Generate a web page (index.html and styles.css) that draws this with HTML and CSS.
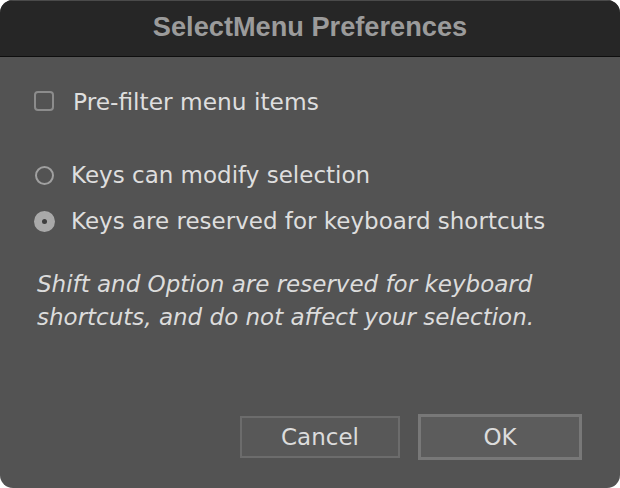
FILE: index.html
```html
<!DOCTYPE html>
<html>
<head>
<meta charset="utf-8">
<link rel="stylesheet" href="styles.css">
</head>
<body>
<div class="window">
  <div class="titlebar">SelectMenu Preferences</div>
  <div class="content">
    <label class="row check-row">
      <span class="checkbox"></span>
      <span class="label">Pre-filter menu items</span>
    </label>
    <div class="radios">
      <label class="row radio-row">
        <span class="radio"></span>
        <span class="label">Keys can modify selection</span>
      </label>
      <label class="row radio-row">
        <span class="radio checked"></span>
        <span class="label">Keys are reserved for keyboard shortcuts</span>
      </label>
    </div>
    <p class="note">Shift and Option are reserved for keyboard shortcuts, and do not affect your selection.</p>
    <div class="buttons">
      <button class="btn cancel">Cancel</button>
      <button class="btn ok">OK</button>
    </div>
  </div>
</div>
</body>
</html>
```
FILE: styles.css
```css
html, body {
  margin: 0;
  padding: 0;
  background: #ffffff;
}
.window {
  width: 620px;
  height: 488px;
  border-radius: 13px;
  overflow: hidden;
  background: #535353;
  display: flex;
  flex-direction: column;
  font-family: "DejaVu Sans", sans-serif;
}
.titlebar {
  background: #262626;
  border-top: 1px solid #4a4a4a;
  border-bottom: 1px solid #0e0e0e;
  box-sizing: border-box;
  height: 57px;
  flex: none;
  display: flex;
  align-items: center;
  justify-content: center;
  color: #9b9b9b;
  font-family: "Liberation Sans", Arial, sans-serif;
  font-weight: bold;
  font-size: 27.2px;
  padding-bottom: 3px;
}
.content {
  flex: 1;
  display: flex;
  flex-direction: column;
  padding: 0 38px 28px 34px;
  color: #dedede;
}
.row {
  display: flex;
  align-items: center;
  font-size: 23px;
  height: 24px;
}
.check-row {
  margin-top: 32px;
  font-size: 23.3px;
}
.checkbox {
  width: 16px;
  height: 16px;
  border: 2px solid #8c8c8c;
  border-radius: 4px;
  margin-right: 19px;
}
.radios {
  margin-top: 50px;
  display: flex;
  flex-direction: column;
  gap: 22px;
}
.radio {
  width: 15px;
  height: 15px;
  border: 2px solid #a0a0a0;
  border-radius: 50%;
  margin-right: 17px;
  margin-left: 1px;
  position: relative;
}
.radio.checked {
  width: 17px;
  height: 17px;
  margin-left: 0;
  margin-right: 16px;
  background: #a9a9a9;
  border-color: #a9a9a9;
}
.radio.checked::after {
  content: "";
  position: absolute;
  left: 6px;
  top: 6px;
  width: 5px;
  height: 5px;
  border-radius: 50%;
  background: #3e3e3e;
}
.note {
  margin: 35px 0 0 3px;
  font-style: italic;
  font-size: 23px;
  line-height: 33px;
  color: #dcdcdc;
}
.buttons {
  margin-top: auto;
  display: flex;
  justify-content: flex-end;
  align-items: center;
  gap: 18px;
}
.btn {
  font-family: "DejaVu Sans", sans-serif;
  font-size: 23px;
  color: #dcdcdc;
  box-sizing: border-box;
  padding: 0;
}
.cancel {
  width: 160px;
  height: 42px;
  background: #585858;
  border: 2px solid #6c6c6c;
}
.ok {
  width: 164px;
  height: 46px;
  background: #5c5c5c;
  border: 3px solid #787878;
}
```
